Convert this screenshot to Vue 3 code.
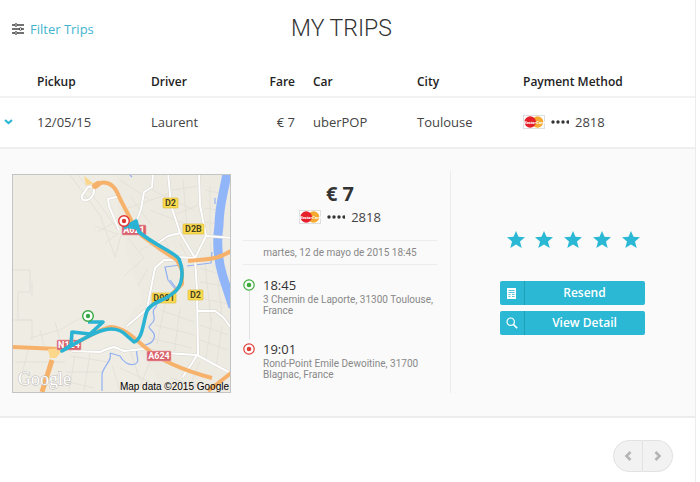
<template>
  <div class="page">
    <header class="page-header">
      <a href="#" class="filter-link" @click.prevent>
        <svg class="filter-icon" viewBox="0 0 12 12" width="12" height="12">
          <path d="M0 2h12M0 6h12M0 10h12" stroke="#444" stroke-width="1.4" />
          <g fill="#fff" stroke="#444">
            <circle cx="4" cy="2" r="1.3" />
            <circle cx="8.5" cy="6" r="1.3" />
            <circle cx="4" cy="10" r="1.3" />
          </g>
        </svg>
        <span>Filter Trips</span>
      </a>
      <h1>My Trips</h1>
    </header>

    <table class="trips">
      <thead>
        <tr>
          <th class="col-toggle"></th>
          <th class="col-pickup">Pickup</th>
          <th class="col-driver">Driver</th>
          <th class="col-fare">Fare</th>
          <th class="col-car">Car</th>
          <th class="col-city">City</th>
          <th>Payment Method</th>
        </tr>
      </thead>
      <tbody>
        <tr class="trip-row">
          <td class="col-toggle">
            <button class="toggle" aria-label="Toggle trip" @click="expanded = !expanded">
              <svg viewBox="0 0 9 6" width="9" height="6">
                <path d="M1 1l3.5 3L8 1" fill="none" stroke="#2bb8d4" stroke-width="2.2" />
              </svg>
            </button>
          </td>
          <td>{{ trip.date }}</td>
          <td>{{ trip.driver }}</td>
          <td class="col-fare">{{ trip.fare }}</td>
          <td>{{ trip.car }}</td>
          <td>{{ trip.city }}</td>
          <td>
            <div class="payment">
              <svg class="card-icon" viewBox="0 0 22 14" width="22" height="14">
                <rect x=".5" y=".5" width="21" height="13" fill="#fff" stroke="#dedede" />
                <circle cx="14.5" cy="7" r="5.8" fill="#f5a930" />
                <circle cx="7.2" cy="7" r="5.8" fill="#e5202b" />
                <text x="11" y="8.6" text-anchor="middle" class="card-brand">MasterCard</text>
              </svg>
              <svg class="dots" viewBox="0 0 18 4" width="18" height="4" fill="#333">
                <circle v-for="n in 4" :key="n" :cx="n * 5 - 3" cy="2" r="1.7" />
              </svg>
              <span>{{ trip.card }}</span>
            </div>
          </td>
        </tr>

        <tr v-if="expanded">
          <td colspan="7" class="detail-cell">
            <div class="detail">
              <svg class="map" viewBox="13 175 217 217">
                <rect x="13" y="175" width="217" height="217" fill="#efece4" />
                <path d="M117 175L119 225 142 300 122 325 165 392H231V175Z" fill="#edeae2" />

                <!-- minor streets -->
                <g fill="none" stroke="#e1ded7" stroke-width=".8">
                  <path d="M13 270h17v22h-12v28h14v20M32 296v-14M13 320h18M30 338l30 -8 20 -12 30 8M40 330l4 16M55 322l6 22" />
                  <path d="M70 175l30 40 15 42 6 -22M78 175l25 34 14 20M95 226l22 8M98 232l15 -9M105 243l14 -10" />
                  <path d="M15 362h50M70 356l38 6M65 372h38M75 355l-6 36M90 354l-6 37M28 350l-6 24M112 365l8 26M60 380l34 8" />
                  <path d="M120 180l30 20M128 208l40 -14M152 190l42 20M150 210l46 18M130 196l22 30M172 190l26 -4M174 215l24 -10M183 180l4 46M205 190l18 4M204 208l14 2M205 222l12 2M210 186v50" />
                  <path d="M200 268l26 8M200 282l24 4M200 298l28 6M205 262l6 60M218 280l4 36M200 325l28 10M200 340l28 10M212 318l-6 40M222 326l-6 42" />
                  <path d="M160 310l34 12M155 325l40 10M150 338l42 10M165 304l-8 40M180 308l-6 46M170 378l30 8M130 350l10 30M120 368l30 14M150 362l-10 24M200 362l-12 28M212 262l-2 -20" />
                  <path d="M140 250l14 -6M128 238l16 20 -20 18M148 268l-10 18M180 243l8 16M165 240l6 14" />
                </g>

                <!-- rivers -->
                <path d="M227 173C224 192 219 206 219 225C216 246 219 264 223 277L233 307" fill="none" stroke="#91b5f9" stroke-width="9" />
                <g fill="none" stroke="#91b0f2" stroke-width="1.2" stroke-linejoin="round">
                  <path d="M215 198v6M130 175l2 2M212 252l-1 11 -24 3M180 265l-15 2 3 13 8 10" />
                  <path d="M170 280l6 8M158 296c-6 4 2 8 -3 12s2 9 -2 14 -6 4 -1 9 2 12 -7 14M110 353l10 3c3 6 9 10 15 8s0 -10 2 -14M110 353c3 8 -8 14 -8 22v16" />
                </g>

                <!-- white roads -->
                <g fill="none" stroke="#d8d5ce" stroke-width="3" stroke-linejoin="round">
                  <path v-for="d in roads" :key="d" :d="d" />
                </g>
                <g fill="none" stroke="#fff" stroke-width="2" stroke-linejoin="round">
                  <path v-for="d in roads" :key="d" :d="d" />
                </g>

                <!-- highways -->
                <g fill="none" stroke="#f6b26b" stroke-width="4" stroke-linejoin="round">
                  <path d="M94 186C103 180 112 182 117 192C122 204 128 213 134 226L142 236 160 249 177 260 182 270 182 284 172 294" />
                  <path d="M188 261C202 259 216 261 231 251M13 347L58 349M62 350C80 342 98 329 111 327C124 328 132 336 146 348C162 362 186 371 212 378M208 391l23 -18" />
                  <path d="M52 360L42 392" stroke-width="5" />
                </g>
                <path d="M84 176l10 8 -8 1zM48 349l16 -1 -8 10h-6z" fill="#fbd68b" />
                <path d="M95 186l3 -2" stroke="#f6b26b" stroke-width="6" stroke-linecap="round" />

                <g v-for="(label, i) in labels" :key="i">
                  <rect :x="label.x" :y="label.y" :width="label.w" height="10" rx="1" :class="label.kind" />
                  <text
                    :x="label.x + label.w / 2"
                    :y="label.y + 8"
                    text-anchor="middle"
                    class="road-label"
                    :class="label.kind + '-text'"
                  >{{ label.text }}</text>
                </g>

                <!-- trip route -->
                <path
                  d="M88 322H103L90 334 72 332 71 345 62 351C78 342 92 333 104 330S122 331 126 335L134 342C143 339 143 322 147 311C151 302 164 301 172 294C185 286 183 268 179 259C174 252 156 246 139 232L136 221 124 228"
                  fill="none"
                  stroke="#2bb3d3"
                  stroke-width="3.6"
                  stroke-linejoin="round"
                />
                <path d="M127 228l10 -9 1 11z" fill="#2bb3d3" />
                <g stroke-width="1.4" fill="#fff">
                  <circle cx="88" cy="316" r="5.3" stroke="#35a845" />
                  <circle cx="88" cy="316" r="2.2" fill="#35a845" />
                  <circle cx="124" cy="221" r="5.3" stroke="#e0322f" />
                  <circle cx="124" cy="221" r="2.2" fill="#e0322f" />
                </g>

                <text x="18" y="385" class="map-logo">Google</text>
                <text x="229" y="390" text-anchor="end" class="map-credit">Map data ©2015 Google</text>
              </svg>

              <div class="summary">
                <div class="total">{{ trip.fare }}</div>
                <div class="payment payment-center">
                  <svg class="card-icon" viewBox="0 0 22 14" width="22" height="14">
                    <rect x=".5" y=".5" width="21" height="13" fill="#fff" stroke="#dedede" />
                    <circle cx="14.5" cy="7" r="5.8" fill="#f5a930" />
                    <circle cx="7.2" cy="7" r="5.8" fill="#e5202b" />
                    <text x="11" y="8.6" text-anchor="middle" class="card-brand">MasterCard</text>
                  </svg>
                  <svg class="dots" viewBox="0 0 18 4" width="18" height="4" fill="#333">
                    <circle v-for="n in 4" :key="n" :cx="n * 5 - 3" cy="2" r="1.7" />
                  </svg>
                  <span>{{ trip.card }}</span>
                </div>
                <div class="trip-date">{{ trip.longDate }}</div>
                <ul class="stops">
                  <li v-for="stop in stops" :key="stop.time" class="stop" :class="stop.color">
                    <div class="marker">
                      <svg viewBox="0 0 12 12" width="12" height="12">
                        <circle cx="6" cy="6" r="5.2" fill="#fff" stroke="currentColor" stroke-width="1.2" />
                        <circle cx="6" cy="6" r="2.3" fill="currentColor" />
                      </svg>
                    </div>
                    <div>
                      <div class="stop-time">{{ stop.time }}</div>
                      <div class="stop-address">{{ stop.address }}</div>
                    </div>
                  </li>
                </ul>
              </div>

              <div class="actions">
                <div class="stars">
                  <svg v-for="n in 5" :key="n" viewBox="0 0 18 17" width="18" height="17">
                    <path d="M9 0l2.5 5.8 6.5.4-5 4.2 1.7 6.6L9 13.4 3.3 17 5 10.4 0 6.2l6.5-.4z" fill="#2bb8d4" />
                  </svg>
                </div>
                <button class="action">
                  <span class="action-icon">
                    <svg viewBox="0 0 9 11" width="9" height="11">
                      <path d="M0 0h9v11H0z" fill="#fff" />
                      <path d="M1.5 2.5h6M1.5 4.5h6M1.5 6.5h2M5 6.5h2.5M1.5 8.5h2M5 8.5h2.5" stroke="#2bb8d4" stroke-width=".8" />
                    </svg>
                  </span>
                  <span class="action-text">Resend</span>
                </button>
                <button class="action">
                  <span class="action-icon">
                    <svg viewBox="0 0 12 12" width="12" height="12" fill="none" stroke="#fff">
                      <circle cx="4.7" cy="4.7" r="3.7" stroke-width="1.2" />
                      <path d="M7.4 7.4l3.8 3.8" stroke-width="1.6" />
                    </svg>
                  </span>
                  <span class="action-text">View Detail</span>
                </button>
              </div>
            </div>
          </td>
        </tr>
      </tbody>
    </table>

    <nav class="pager">
      <button aria-label="Previous">
        <svg viewBox="0 0 8 10" width="8" height="10">
          <path d="M6.5 1L2.5 5l4 4" fill="none" stroke="#b5b5b5" stroke-width="2.6" />
        </svg>
      </button>
      <button aria-label="Next">
        <svg viewBox="0 0 8 10" width="8" height="10">
          <path d="M1.5 1l4 4-4 4" fill="none" stroke="#b5b5b5" stroke-width="2.6" />
        </svg>
      </button>
    </nav>
  </div>
</template>

<script setup>
import { ref } from 'vue';

const expanded = ref(true);

const trip = {
  date: '12/05/15',
  driver: 'Laurent',
  fare: '€ 7',
  car: 'uberPOP',
  city: 'Toulouse',
  card: '2818',
  longDate: 'martes, 12 de mayo de 2015 18:45'
};

const stops = [
  { time: '18:45', address: '3 Chemin de Laporte, 31300 Toulouse, France', color: 'green' },
  { time: '19:01', address: 'Rond-Point Emile Dewoitine, 31700 Blagnac, France', color: 'red' }
];

const roads = [
  'M168 173L171 205 180 233 195 258',
  'M199 173L200 205 206 236 195 258 197 290 198 355',
  'M206 236L232 238',
  'M158 243L168 236 180 233',
  'M153 173L152 187 144 192 141 209 135 225',
  'M177 257L195 258',
  'M92 187c-5 -2 -6 4 -9 7s-1 7 4 6 8 -8 7 -12',
  'M120 196L108 199 109 206 119 230',
  'M127 326L147 309 151 288 155 268 164 260 178 260',
  'M72 351L100 352 107 349 114 347 124 351 143 349 165 353 197 355 232 374',
  'M197 355L191 365 187 370 183 377',
  'M198 311L215 311 223 317 232 329'
];

const labels = [
  { text: 'A621', x: 122, y: 225, w: 24, kind: 'red-label' },
  { text: 'D2', x: 163, y: 198, w: 15, kind: 'yellow-label' },
  { text: 'D2B', x: 183, y: 224, w: 21, kind: 'yellow-label' },
  { text: 'D2', x: 188, y: 290, w: 15, kind: 'yellow-label' },
  { text: 'D901', x: 152, y: 293, w: 24, kind: 'yellow-label' },
  { text: 'A624', x: 147, y: 351, w: 24, kind: 'red-label' },
  { text: 'N124', x: 57, y: 340, w: 24, kind: 'red-label' }
];
</script>

<style>
body {
  background: #fff;
}
</style>

<style scoped>
.page {
  margin-right: 4px;
  border-right: 1px solid #ececec;
  min-height: 100vh;
  font-family: 'Open Sans', 'Noto Sans', sans-serif;
  font-size: 13px;
  line-height: 18px;
  color: #444;
}

button {
  font-family: inherit;
  padding: 0;
  border: none;
  cursor: pointer;
}

svg {
  display: block;
  flex: none;
}

.page-header {
  display: grid;
  grid-template-columns: 1fr auto 1fr;
  align-items: center;
  padding: 14px 24px 9px 12px;
}

.filter-link {
  display: flex;
  align-items: center;
  gap: 6px;
  color: #42b4cf;
  text-decoration: none;
}

h1 {
  margin: 0;
  font-family: Roboto, 'Open Sans', sans-serif;
  font-size: 23px;
  line-height: 30px;
  font-weight: 300;
  text-transform: uppercase;
  color: #333;
}

/* Trips table */
.trips {
  width: 100%;
  table-layout: fixed;
  border-collapse: separate;
  border-spacing: 0;
}

th,
td {
  padding: 0;
  text-align: left;
}

th {
  height: 45px;
  padding-top: 14px;
  border-bottom: 2px solid #f2f2f2;
  font-size: 12px;
  font-weight: 600;
  color: #222;
  box-sizing: border-box;
}

.trip-row td {
  height: 51px;
  padding-bottom: 2px;
  box-sizing: border-box;
  border-bottom: 2px solid #efefef;
}

.col-toggle {
  width: 37px;
}

.col-pickup {
  width: 114px;
}

.col-driver {
  width: 92px;
}

.col-fare {
  width: 70px;
  padding-right: 18px;
  text-align: right;
  box-sizing: border-box;
}

.col-car {
  width: 104px;
}

.col-city {
  width: 106px;
}

.toggle {
  display: block;
  padding: 4px;
  background: none;
}

.payment {
  display: flex;
  align-items: center;
  gap: 6px;
}

.payment-center {
  justify-content: center;
}

.card-brand {
  font-size: 4px;
  font-style: italic;
  font-weight: 700;
  fill: #fff;
}

/* Expanded trip */
.detail-cell {
  background: #fafafa;
  border-bottom: 2px solid #ececec;
}

.detail {
  display: grid;
  grid-template-columns: 219px 220px 1fr;
  padding: 22px 2px 23px 12px;
}

.map {
  width: 217px;
  height: 217px;
  margin-top: 3px;
  border: 1px solid #c4c4c4;
}

.yellow-label {
  fill: #fbdc50;
  stroke: #d9b52e;
  stroke-width: 0.6;
}

.red-label {
  fill: #d9616b;
  stroke: #e9a3a8;
  stroke-width: 0.6;
}

.road-label {
  font-family: Roboto, 'Liberation Sans', sans-serif;
  font-size: 9px;
  font-weight: 700;
}

.yellow-label-text {
  fill: #4a431f;
}

.red-label-text {
  fill: #fff;
}

.map-logo {
  font-family: 'Liberation Serif', serif;
  font-size: 18px;
  fill: #fff;
  stroke: #bbb9b4;
  stroke-width: 1;
  paint-order: stroke;
}

.map-credit {
  font-family: 'Liberation Sans', sans-serif;
  font-size: 10px;
  fill: #000;
}

.summary {
  padding: 0 13px 0 12px;
  border-right: 1px solid #ececec;
}

.total {
  padding-top: 9px;
  font-size: 20px;
  line-height: 28px;
  font-weight: 700;
  text-align: center;
  color: #333;
}

.trip-date {
  margin-top: 14px;
  border: 1px solid #ececec;
  border-width: 1px 0;
  font-family: Roboto, 'Open Sans', sans-serif;
  font-size: 10px;
  line-height: 23px;
  text-align: center;
  color: #888;
}

.stops {
  margin: 0;
  padding: 11px 0 0;
  list-style: none;
}

.stop {
  display: grid;
  grid-template-columns: 12px 1fr;
  column-gap: 8px;
}

.stop:first-child {
  min-height: 64px;
}

.marker {
  display: flex;
  flex-direction: column;
  align-items: center;
  padding-top: 3px;
}

.stop:first-child .marker::after {
  content: '';
  flex: 1;
  width: 1px;
  background: #e2e2e2;
}

.green {
  color: #3dab3a;
}

.red {
  color: #e03c38;
}

.stop-time {
  line-height: 18px;
  color: #333;
}

.stop-address {
  font-family: Roboto, 'Open Sans', sans-serif;
  font-size: 10px;
  line-height: 11px;
  color: #888;
}

.actions {
  width: 145px;
  margin: 0 auto;
  padding-top: 60px;
}

.stars {
  display: flex;
  justify-content: space-between;
  padding: 0 5px 0 7px;
  margin-bottom: 33px;
}

.action {
  display: flex;
  width: 100%;
  height: 24px;
  margin-bottom: 6px;
  border-radius: 2px;
  background: #2bb8d4;
  color: #fff;
  font-size: 12px;
  font-weight: 600;
  line-height: 24px;
}

.action-icon {
  display: flex;
  align-items: center;
  justify-content: center;
  width: 24px;
  height: 24px;
  border-right: 1px solid #249fb8;
}

.action-text {
  flex: 1;
  text-align: center;
}

/* Pager */
.pager {
  display: flex;
  justify-content: flex-end;
  padding: 22px 22px 0 0;
}

.pager button {
  display: flex;
  align-items: center;
  justify-content: center;
  width: 30px;
  height: 32px;
  box-sizing: border-box;
  border: 1px solid #e2e2e2;
  background: #f2f2f2;
}

.pager button:first-child {
  border-radius: 16px 0 0 16px;
}

.pager button:last-child {
  border-left: none;
  border-radius: 0 16px 16px 0;
}
</style>
